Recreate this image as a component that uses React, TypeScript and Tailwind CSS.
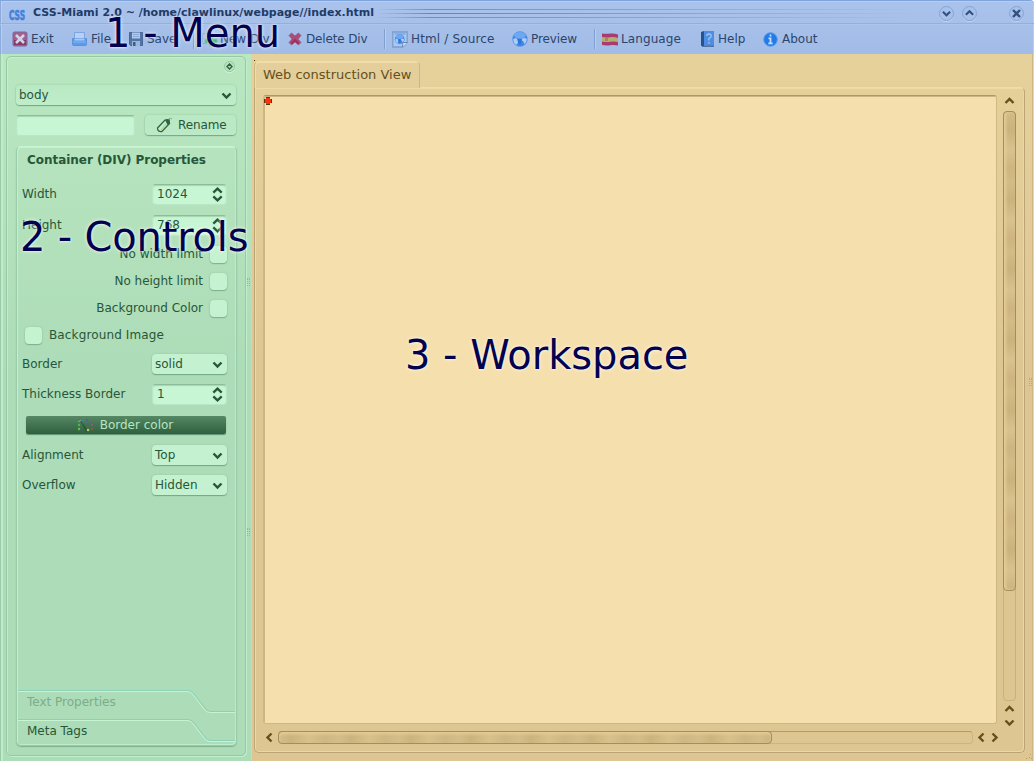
import React from "react";

type Dir = "up" | "down" | "left" | "right";

const chevrons: Record<Dir, string> = {
  up: "M1.5 7 5.5 3 9.5 7",
  down: "M1.5 3.5 5.5 7.5 9.5 3.5",
  left: "M7.5 1.5 3.5 5.5 7.5 9.5",
  right: "M3.5 1.5 7.5 5.5 3.5 9.5",
};

function Chevron({ dir, className = "" }: { dir: Dir; className?: string }) {
  return (
    <svg width="11" height="11" viewBox="0 0 11 11" className={`shrink-0 ${className}`} fill="none" stroke="currentColor" strokeWidth="2.4">
      <path d={chevrons[dir]} />
    </svg>
  );
}

function ExitIcon() {
  return (
    <svg width="16" height="16" viewBox="0 0 16 16">
      <rect x="1" y="1" width="14" height="14" rx="1.5" fill="#a65f86" stroke="#7768a0" />
      <path d="M2 9h12v5H2z" fill="#8d3864" />
      <path d="M4 4l8 8M12 4l-8 8" stroke="#ccd4ee" strokeWidth="2.6" />
    </svg>
  );
}

function FileIcon() {
  return (
    <svg width="17" height="16" viewBox="0 0 17 16" className="-ml-px">
      <path d="M3.5 1.5h10v8h-10z" fill="#b7d0f4" stroke="#7ea5e0" />
      <path d="M1.5 7.5h14v6q0 1-1 1h-12q-1 0-1-1z" fill="#5a9cec" stroke="#5b90da" />
      <path d="M3.5 7.5h10v2h-10z" fill="#a9c8f3" />
      <path d="M2 11h13" stroke="#86b5f3" />
    </svg>
  );
}

function SaveIcon() {
  return (
    <svg width="16" height="16" viewBox="0 0 16 16">
      <path d="M1.5 1.5h13v13h-12l-1-1z" fill="#5474a6" stroke="#46669a" />
      <path d="M4 1.5h8v6H4z" fill="#b3c8e9" />
      <path d="M5 3.5h6M5 5.5h6" stroke="#8eaad6" />
      <path d="M4 10h8v5H4z" fill="#9bb5db" />
      <path d="M5 11h2.5v4H5z" fill="#3d5d91" />
    </svg>
  );
}

function NewDivIcon() {
  return (
    <svg width="17" height="16" viewBox="0 0 17 16">
      <path d="M1.5 2.5h11v10h-11z" fill="none" stroke="#7da5c8" strokeDasharray="2 1" />
      <path d="M8 5h4v3h4v4h-4v3H8v-3H4V8h4z" fill="#34ae6b" stroke="#6cc29c" />
    </svg>
  );
}

function DeleteIcon() {
  return (
    <svg width="14" height="14" viewBox="0 0 14 14">
      <path d="M1 3.5 3.5 1 7 4l3.5-3L13 3.5 10 7l3 3.5-2.5 2.5L7 10l-3.5 3L1 10.5 4 7z" fill="#b04a76" stroke="#85608f" strokeWidth=".8" />
      <path d="M3.5 11.5 7 8l3.5 3.5" fill="none" stroke="#a02f58" strokeWidth="1.8" />
    </svg>
  );
}

function Globe({ cx = 8, cy = 8, r = 7.3 }: { cx?: number; cy?: number; r?: number }) {
  return (
    <g transform={`translate(${cx - r} ${cy - r}) scale(${r / 8})`}>
      <circle cx="8" cy="8" r="7.8" fill="#3f86e6" stroke="#6a9fe6" strokeWidth=".6" />
      <ellipse cx="8" cy="4.2" rx="6" ry="3.4" fill="#6ea8f2" />
      <path d="M.8 8.5 3 7l2 1 1 3-1 2.500-1 .5Q1 12 .8 8.500zM15.200 8l-2-1-3 .500-.5 2 2 1 .5 3Q15.200 11.500 15.200 8z" fill="#aecbf4" />
      <path d="M5.500 8h4v2.500l-1 3h-2z" fill="#2b74dc" />
    </g>
  );
}

function SourceIcon() {
  return (
    <svg width="16" height="17" viewBox="0 0 16 17">
      <path d="M.8 1h14.4v10.5l-4.5 4.5H.8z" fill="#abcaf2" stroke="#7c9dcd" strokeWidth="1.3" />
      <path d="M2.5 3h11" stroke="#74abed" strokeWidth="1.5" />
      <Globe cx={7.7} cy={8.2} r={4.9} />
      <path d="M10.7 16v-4.5h4.5" fill="#d0e0f7" stroke="#6184b7" />
    </svg>
  );
}

function FlagIcon() {
  return (
    <svg width="16" height="13" viewBox="0 0 16 13">
      <path d="M0 .5q4 .5 8 0t8 1V12.500q-4-.8-8-.3T0 12z" fill="#a63c70" />
      <path d="M0 4q4 .8 8 .2t8 .8v4q-4-.8-8-.2T0 8.500z" fill="#b4ae72" />
      <path d="M3 5h3v3H3z" fill="#b08064" />
    </svg>
  );
}

function HelpIcon() {
  return (
    <svg width="13" height="16" viewBox="0 0 13 16" className="ml-px">
      <path d="M0 1l3-1v15H0z" fill="#26528d" />
      <path d="M3 0h10v15H3z" fill="#4e8de2" />
      <path d="M1 15.3h12" stroke="#405f8e" />
      <path d="M5.8 5q0-2 2.2-2t2.2 2q0 1.3-1.5 2T8 9.5M8 11v1.7" fill="none" stroke="#a3c4f2" strokeWidth="1.3" />
    </svg>
  );
}

function AboutIcon() {
  return (
    <svg width="15" height="15" viewBox="0 0 15 15" className="-ml-px">
      <circle cx="7.5" cy="7.5" r="6.8" fill="#1f7ce8" stroke="#5c9aea" />
      <path d="M7.5 2.5v2M5.5 6.3h2V11M5.3 11.4h4.4" fill="none" stroke="#c7dcf7" strokeWidth="1.8" />
    </svg>
  );
}

function MenuItem({ icon, label, className, slot = "w-[19px]" }: { icon: React.ReactNode; label: string; className: string; slot?: string }) {
  return (
    <div className={`flex shrink-0 items-center ${className}`}>
      <span className={`flex shrink-0 ${slot}`}>{icon}</span>
      <span className="whitespace-nowrap">{label}</span>
    </div>
  );
}

function Divider() {
  return <div className="h-5 w-0 shrink-0 border-l border-[#7f9fd0] shadow-[1px_0_0_#b9cef0]" />;
}

function Combo({ value, className = "" }: { value: string; className?: string }) {
  return (
    <div className={`flex h-5 items-center justify-between rounded-[4px] pr-1 pl-[3px] shadow-[0_1px_1px_#71a984,0_0_2px_#8dc49b] ${className}`}>
      <span>{value}</span>
      <Chevron dir="down" className="text-[#265737]" />
    </div>
  );
}

function Spin({ value }: { value: string }) {
  return (
    <div className="flex h-[21px] w-[75px] items-center justify-between rounded-[4px] border border-[#b9e7c5] border-t-[#8dbc99] bg-[#c7f6d4] pr-[3px] pl-1 shadow-[inset_0_1px_1px_#a6d5b2]">
      <span>{value}</span>
      <svg width="11" height="15" viewBox="0 0 11 15" fill="none" stroke="#265737" strokeWidth="2.3">
        <path d="M1.3 5.7 5.5 1.7 9.7 5.7M1.3 9.3 5.5 13.3 9.7 9.3" />
      </svg>
    </div>
  );
}

function Check() {
  return <div className="h-[17px] w-[17px] shrink-0 rounded-[4px] bg-[#c5f2d1] shadow-[0_1px_1px_#7db18c,0_0_2px_#8dc49b]" />;
}

function Field({ label, className, children }: { label: string; className: string; children: React.ReactNode }) {
  return (
    <div className={`flex items-center justify-between pr-[9px] pl-[5px] ${className}`}>
      <span>{label}</span>
      {children}
    </div>
  );
}

function CheckRow({ label, className }: { label: string; className: string }) {
  return (
    <div className={`flex items-center justify-end gap-[7px] pr-[9px] ${className}`}>
      <span>{label}</span>
      <Check />
    </div>
  );
}

function PageTab({ label, className }: { label: string; className: string }) {
  return (
    <div className={`relative flex h-[29px] items-start pt-1 pl-[10px] ${className}`}>
      <svg className="absolute -top-[2px] left-0" width="219" height="26" viewBox="0 0 219 26" fill="none">
        <path d="M1 1.5H171Q175 1.5 178 6L188 19Q190 22.5 194 22.5H218" stroke="#8bd0b9" />
        <path d="M1 2.5H171Q174 2.5 177 7L187 20Q189 23.5 193 23.5H218" stroke="#c5f4d3" />
      </svg>
      <span className="relative leading-[14px]">{label}</span>
    </div>
  );
}

function WindowButton({ children, className = "" }: { children: React.ReactNode; className?: string }) {
  return (
    <div className={`flex h-[15px] w-[15px] items-center justify-center rounded-full border border-[#86a4d4] text-[#33517f] shadow-[0_1px_0_#bed3f4] ${className}`}>
      {children}
    </div>
  );
}

function TitleBar() {
  return (
    <div className="flex h-[23px] items-center border-b border-[#92afdd] pt-[2px] pl-2 shadow-[0_1px_0_#acc5ec]">
      <svg width="18" height="18" viewBox="0 0 18 18" className="mt-[3px] shrink-0">
        <text x="1" y="14" textLength="16" lengthAdjust="spacingAndGlyphs" fontSize="14" fontWeight="bold" fill="#4581da" stroke="#4581da" strokeWidth=".7">CSS</text>
      </svg>
      <span className="ml-[7px] w-[343px] shrink-0 text-[11px] font-bold whitespace-nowrap text-[#1f3b66]">CSS-Miami 2.0 ~ /home/clawlinux/webpage//index.html</span>
      <div className="flex h-[9px] w-[548px] shrink-0 flex-col justify-between">
        <div className="h-px bg-linear-to-r from-transparent via-[#5b92df] via-10% to-transparent" />
        <div className="h-px bg-linear-to-r from-transparent via-[#4f89d8] via-10% to-transparent" />
        <div className="h-px bg-linear-to-r from-transparent via-[#5b92df] via-10% to-transparent" />
      </div>
      <div className="ml-[15px] flex">
        <WindowButton><Chevron dir="down" className="scale-90" /></WindowButton>
        <WindowButton className="ml-2"><Chevron dir="up" className="scale-90" /></WindowButton>
        <WindowButton className="ml-8">
          <svg width="9" height="9" viewBox="0 0 9 9" stroke="currentColor" strokeWidth="2.4"><path d="M1 1l7 7M8 1l-7 7" /></svg>
        </WindowButton>
      </div>
    </div>
  );
}

function MenuBar() {
  return (
    <div className="flex h-[30px] items-center pl-3 text-[12px] text-[#2b456d]">
      <MenuItem className="w-[60px]" icon={<ExitIcon />} label="Exit" />
      <MenuItem className="w-[56px]" icon={<FileIcon />} label="File" />
      <MenuItem className="w-[65px]" icon={<SaveIcon />} label="Save" />
      <Divider />
      <MenuItem className="w-[94px] pl-[7px]" icon={<NewDivIcon />} label="New Div" />
      <MenuItem className="w-[96px] tracking-[-0.15px]" slot="w-[18px]" icon={<DeleteIcon />} label="Delete Div" />
      <Divider />
      <MenuItem className="w-[127px] pl-[7px] tracking-[0.15px]" icon={<SourceIcon />} label="Html / Source" />
      <MenuItem className="w-[82px] tracking-[-0.1px]" icon={<svg width="17" height="16" viewBox="0 0 17 16"><Globe cx={8} cy={8} r={7.7} /></svg>} label="Preview" />
      <Divider />
      <MenuItem className="w-[105px] pl-[7px] tracking-[0.1px]" icon={<FlagIcon />} label="Language" />
      <MenuItem className="w-[64px]" slot="w-[18px]" icon={<HelpIcon />} label="Help" />
      <MenuItem className="" slot="w-[18px]" icon={<AboutIcon />} label="About" />
    </div>
  );
}

function Controls() {
  return (
    <aside className="flex w-[251px] shrink-0 border-l border-[#9acba8] bg-linear-to-b from-[#b8e7c0] to-[#addcb8] to-45% pt-[2px] pr-[5px] pb-[5px] pl-[5px] text-[12px] text-[#285639] shadow-[inset_2px_0_0_#bfeccb]">
      <div className="flex flex-1 flex-col rounded-[5px] border border-[#97c9a4] pr-[8px] pb-[9px] pl-[9px] shadow-[inset_1px_1px_0_#c2eecc,1px_1px_0_#c2eecc]">
        <div className="flex h-[28px] justify-end pt-[4px] pr-[2px]">
          <div className="flex h-[11px] w-[11px] items-center justify-center rounded-full border border-[#95c6a3] shadow-[0_1px_0_#cbf6d5]">
            <svg width="7" height="7" viewBox="0 0 7 7" fill="none" stroke="#336245" strokeWidth="1.5"><path d="M3.5 1 6 3.5 3.5 6 1 3.5z" /></svg>
          </div>
        </div>
        <Combo value="body" className="w-[220px] bg-linear-to-b from-[#b9e9c3] to-[#bfedca]" />
        <div className="mt-[10px] flex justify-between pr-px">
          <div className="h-[21px] w-[119px] rounded-[3px] border border-[#b9e7c5] border-t-[#8dbc99] bg-[#c7f6d4] shadow-[inset_0_1px_1px_#a6d5b2]" />
          <div className="flex h-5 w-[91px] items-center rounded-[4px] bg-linear-to-b from-[#b9e9c3] to-[#bce9c7] pl-[11px] tracking-[-0.1px] shadow-[0_1px_1px_#71a984,0_0_2px_#8dc49b]">
            <svg width="17" height="17" viewBox="0 0 17 17">
              <path d="M1.5 11 9 3l4-.5.5 4L6 14.5Q1.5 15 1.5 11z" fill="#c1edc8" stroke="#2f6342" strokeWidth="1.3" />
              <path d="M9 3l4-.5.5 4-2 1.5z" fill="#346549" />
              <path d="M5 13l5-6" stroke="#bcc57b" />
              <path d="M13 3q0-3 3-1" fill="none" stroke="#7bab88" />
            </svg>
            <span className="ml-[5px]">Rename</span>
          </div>
        </div>
        <div className="mt-[10px] flex flex-1 flex-col rounded-[5px] border border-[#9bcca9] border-t-[#c7f4d1] shadow-[inset_1px_1px_0_#c4f0ce,inset_-1px_-1px_0_#bdebc8,0_1px_1px_#7fb08d]">
          <div className="h-[32px] pt-[4px] pl-[10px] font-bold tracking-[-0.04px]">Container (DIV) Properties</div>
          <Field className="h-[30px]" label="Width"><Spin value="1024" /></Field>
          <Field className="h-[32px]" label="Height"><Spin value="768" /></Field>
          <CheckRow className="h-[26px]" label="No width limit" />
          <CheckRow className="h-[28px]" label="No height limit" />
          <CheckRow className="h-[26px]" label="Background Color" />
          <div className="flex h-[28px] items-center gap-[7px] pl-2 tracking-[0.13px]"><Check /><span>Background Image</span></div>
          <Field className="h-[30px]" label="Border"><Combo value="solid" className="w-[75px] bg-[#c4f2d0]" /></Field>
          <Field className="h-[30px]" label="Thickness Border"><Spin value="1" /></Field>
          <div className="flex h-[32px] items-center pl-[9px]">
            <div className="flex h-[18px] w-[200px] items-center justify-center gap-[6px] rounded-[2px] bg-linear-to-b from-[#578864] to-[#2e6040] pr-[2px] text-[#b5e6c2] shadow-[0_1px_1px_#5d906c]">
              <svg width="17" height="15" viewBox="0 0 17 15">
                <path d="M2 0l9 13-2 1z" fill="#2b523a" />
                <path d="M1 4l3-2" stroke="#88b795" />
                <circle cx="2" cy="7" r="1.2" fill="#46be47" /><circle cx="2" cy="11" r="1.2" fill="#66c339" />
                <circle cx="6" cy="2.5" r="1" fill="#3888b2" /><circle cx="10" cy="2" r="1" fill="#4f5cae" />
                <circle cx="14" cy="4" r="1" fill="#6b5a9b" /><circle cx="15" cy="7" r="1" fill="#a3528f" />
                <circle cx="15" cy="11" r="1" fill="#ba5037" /><circle cx="11" cy="12" r="1.3" fill="#bac75e" />
              </svg>
              <span>Border color</span>
            </div>
          </div>
          <Field className="h-[28px]" label="Alignment"><Combo value="Top" className="w-[75px] bg-[#c4f2d0]" /></Field>
          <Field className="h-[32px]" label="Overflow"><Combo value="Hidden" className="w-[75px] bg-[#c4f2d0]" /></Field>
          <div className="flex-1" />
          <PageTab label="Text Properties" className="text-[#7bad8a]" />
          <PageTab label="Meta Tags" className="mb-[-4px]" />
        </div>
      </div>
    </aside>
  );
}

function Workspace() {
  return (
    <main className="flex min-w-0 flex-1 flex-col border-l border-[#e8cfa0] bg-linear-to-b from-[#e6d19b] to-[#dec692] to-45% pt-[7px] pr-[9px] pb-2 pl-[2px] text-[#65501c] shadow-[inset_-1px_0_0_#efd9a5,inset_-2px_0_0_#cdb684]">
      <div className="relative z-10 mb-[-1px] flex h-[27px] w-[166px] items-center rounded-t-[5px] border border-b-0 border-[#cdb680] border-t-[#f2dda9] bg-[#e4cf9a] pl-[8px] text-[13px] whitespace-nowrap shadow-[inset_1px_1px_0_#f0dca9]">
        Web construction View
      </div>
      <div className="flex flex-1 rounded-b-[5px] rounded-tr-[5px] border border-[#bba475] border-t-[#f2dda9] pt-[7px] pb-[6px] pl-2 shadow-[inset_1px_1px_0_#eedaa6,inset_-1px_-1px_0_#ecd6a3]">
        <div className="flex w-[734px] shrink-0 flex-col">
          <div className="h-[629px] rounded-[3px] border border-[#ceb783] border-t-[#b09865] bg-[#f5dfad] shadow-[inset_1px_1px_0_#cbb583]">
            <svg width="8" height="9" viewBox="0 0 8 9" className="mt-px">
              <path d="M2 0h4v2h2v4H6v2H2V6H0V2h2z" fill="#563414" />
              <path d="M2 1h4v1h1v4H6v1H2V6H1V2h1z" fill="#f93408" />
            </svg>
          </div>
          <div className="mt-[7px] flex h-[13px] items-center">
            <Chevron dir="left" className="mr-[3px] ml-px" />
            <div className="h-[13px] w-[695px] rounded-[4px] border border-[#cdb580] border-t-[#b39b68]">
              <div className="-mt-px -ml-px h-[13px] w-[494px] rounded-[4px] border border-[#a58e5c] bg-[repeating-linear-gradient(90deg,#d5bd89_0px,#ccb47f_12px,#d9c18c_30px,#cfb783_46px,#d5bd89_60px)] shadow-[inset_0_2px_3px_#e5cc98]" />
            </div>
          </div>
        </div>
        <div className="ml-[6px] flex w-[13px] flex-col items-center">
          <Chevron dir="up" className="mt-px mb-[4px]" />
          <div className="h-[590px] w-[13px] shrink-0 rounded-[4px] border border-[#c9b17d]">
            <div className="-mt-px -ml-px h-[480px] w-[13px] rounded-[4px] border border-[#a58e5c] bg-[repeating-linear-gradient(180deg,#d4bc86_0px,#cbb37e_18px,#dac28e_38px,#cdb480_56px,#d4bc86_70px)] shadow-[inset_2px_0_3px_#e5cc98]" />
          </div>
          <Chevron dir="up" className="mt-[3px]" />
          <Chevron dir="down" className="mt-[2px]" />
        </div>
      </div>
      <div className="absolute top-[732px] left-[976px] flex gap-[2px]">
        <Chevron dir="left" />
        <Chevron dir="right" />
      </div>
    </main>
  );
}

function Grip({ className }: { className: string }) {
  return <div className={`absolute h-2 w-[3px] border-x border-dotted border-[#8c9f78] opacity-60 ${className}`} />;
}

function Caption({ text, className }: { text: string; className: string }) {
  return (
    <div className={`absolute z-20 text-[40px] leading-[48px] whitespace-nowrap text-[#02014f] [text-shadow:0_0_2px_#ffffffcc,0_0_4px_#ffffffb0] ${className}`}>
      {text}
    </div>
  );
}

export default function App() {
  return (
    <div className="relative flex h-[761px] w-[1034px] flex-col overflow-hidden font-['DejaVu_Sans',sans-serif]">
      <header className="h-[54px] shrink-0 rounded-tr-[4px] border-t border-[#7fa4db] bg-linear-to-b from-[#aac3ed] to-[#a1bce6] shadow-[inset_1px_0_0_#8cabdc,inset_2px_1px_0_#b7cef3,inset_-1px_0_0_#b7cef3]">
        <TitleBar />
        <MenuBar />
      </header>
      <div className="flex min-h-0 flex-1">
        <Controls />
        <Workspace />
      </div>
      <Grip className="top-[278px] left-[247px]" />
      <Grip className="top-[528px] left-[247px]" />
      <Grip className="top-[378px] left-[1029px]" />
      <svg className="absolute top-[752px] left-[1025px]" width="8" height="8" fill="#b59d6c">
        <path d="M1 6h1v1H1zM4 5h1v1H4zM5 2h1v1H5zM6 6h1v1H6z" />
      </svg>
      <div className="absolute top-[60px] left-[254px] h-px w-px bg-[#3a2d10]" />
      <Caption text="1 - Menu" className="top-[9px] left-[105px]" />
      <Caption text="2 - Controls" className="top-[213px] left-[20px] tracking-[-0.2px]" />
      <Caption text="3 - Workspace" className="top-[331px] left-[405px] tracking-[-0.04px]" />
    </div>
  );
}
